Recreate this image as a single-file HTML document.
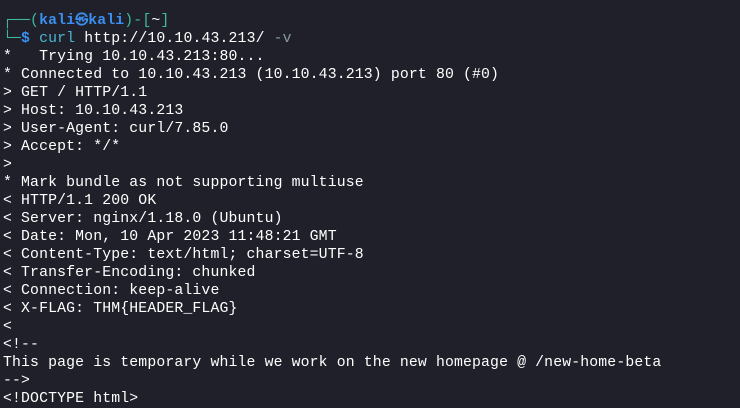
<!DOCTYPE html>
<html><head><style>
html,body{margin:0;padding:0;background:#1f2029;width:740px;height:408px;overflow:hidden}
pre{margin:0;padding:12px 0 0 3px;font-family:"Liberation Mono",monospace;font-size:14.8px;letter-spacing:0.14px;line-height:18px;color:#ffffff;white-space:pre}
.g{color:#3fb99d}.b{color:#3b8ff0;font-weight:bold}.c{color:#4ab5d0}.v{color:#8a9aa0}.w{color:#fff}
.sk{display:inline-block;width:13px;text-align:center;font-family:"DejaVu Sans",sans-serif;font-size:13px;overflow:hidden;vertical-align:top}
</style></head><body><pre><span class="g">┌──(</span><span class="b">kali<span class="sk">㉿</span>kali</span><span class="g">)-[</span><span class="w">~</span><span class="g">]</span>
<span class="g">└─</span><span class="b">$</span> <span class="c">curl</span> http://10.10.43.213/ <span class="v">-v</span>
*   Trying 10.10.43.213:80...
* Connected to 10.10.43.213 (10.10.43.213) port 80 (#0)
&gt; GET / HTTP/1.1
&gt; Host: 10.10.43.213
&gt; User-Agent: curl/7.85.0
&gt; Accept: */*
&gt;
* Mark bundle as not supporting multiuse
&lt; HTTP/1.1 200 OK
&lt; Server: nginx/1.18.0 (Ubuntu)
&lt; Date: Mon, 10 Apr 2023 11:48:21 GMT
&lt; Content-Type: text/html; charset=UTF-8
&lt; Transfer-Encoding: chunked
&lt; Connection: keep-alive
&lt; X-FLAG: THM{HEADER_FLAG}
&lt;
&lt;!--
This page is temporary while we work on the new homepage @ /new-home-beta
--&gt;
&lt;!DOCTYPE html&gt;</pre></body></html>
